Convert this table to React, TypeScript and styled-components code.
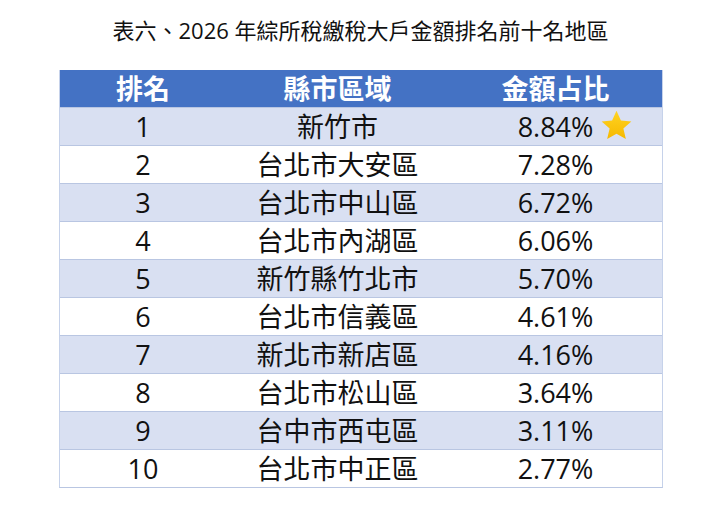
import styled, { createGlobalStyle } from "styled-components";

const rows: [string, string, string][] = [
  ["1", "新竹市", "8.84%"],
  ["2", "台北市大安區", "7.28%"],
  ["3", "台北市中山區", "6.72%"],
  ["4", "台北市內湖區", "6.06%"],
  ["5", "新竹縣竹北市", "5.70%"],
  ["6", "台北市信義區", "4.61%"],
  ["7", "新北市新店區", "4.16%"],
  ["8", "台北市松山區", "3.64%"],
  ["9", "台中市西屯區", "3.11%"],
  ["10", "台北市中正區", "2.77%"],
];

export default function App() {
  return (
    <>
      <GlobalStyle />
      <StyledPage>
        <StyledTitle>{"表六、2026 年綜所稅繳稅大戶金額排名前十名地區"}</StyledTitle>
        <StyledTable>
          <StyledHeadRow>
            <StyledCell>{"排名"}</StyledCell>
            <StyledCell>{"縣市區域"}</StyledCell>
            <StyledCell>{"金額占比"}</StyledCell>
          </StyledHeadRow>
          {rows.map(([rank, area, share], i) => (
            <StyledRow key={rank} $shaded={i % 2 === 0}>
              <StyledCell>{rank}</StyledCell>
              <StyledCell>{area}</StyledCell>
              <StyledCell>
                <StyledShare>
                  {share}
                  {i === 0 && <Star />}
                </StyledShare>
              </StyledCell>
            </StyledRow>
          ))}
        </StyledTable>
      </StyledPage>
    </>
  );
}

function Star() {
  return (
    <StyledStar viewBox="0 0 24 24" aria-hidden>
      <defs>
        <linearGradient id="starFill" x1="0" y1="0" x2="0" y2="1">
          <stop offset="0" stopColor="#ffd322" />
          <stop offset="1" stopColor="#f6b900" />
        </linearGradient>
      </defs>
      <path
        d="M12 1.2l3.2 7.1 7.6.7-5.8 5.1 1.8 7.6L12 17.8l-6.8 3.9 1.8-7.6-5.8-5.1 7.6-.7z"
        fill="url(#starFill)"
      />
    </StyledStar>
  );
}

const GlobalStyle = createGlobalStyle`
  body {
    margin: 0;
    background: #fff;
    font-family: "Open Sans", "Noto Sans CJK TC", sans-serif;
  }
`;

const StyledPage = styled.div`
  width: 701px;
  height: 510px;
  padding: 14px 38px 0 59px;
  box-sizing: border-box;
`;

const StyledTitle = styled.div`
  margin: 0 -38px 24px -39px;
  text-align: center;
  font-size: 22px;
  line-height: 32px;
  color: #111;
`;

const StyledTable = styled.div`
  display: flex;
  flex-direction: column;
  border-left: 1px solid #c6d2ea;
  border-right: 1px solid #c6d2ea;
  border-bottom: 1px solid #b9c6e2;
`;

const StyledHeadRow = styled.div`
  display: grid;
  grid-template-columns: 166px 223px 1fr;
  height: 37px;
  background: #4472c4;
  color: #fff;
  font-weight: 700;
`;

const StyledRow = styled.div<{ $shaded: boolean }>`
  display: grid;
  grid-template-columns: 166px 223px 1fr;
  height: 37px;
  border-top: 1px solid #b9c6e2;
  background: ${(p) => (p.$shaded ? "#d9e0f2" : "#fff")};
  color: #111;
`;

const StyledCell = styled.div`
  display: flex;
  align-items: center;
  justify-content: center;
  font-size: 27px;
  line-height: 1;
`;

const StyledShare = styled.span`
  position: relative;
`;

const StyledStar = styled.svg`
  position: absolute;
  left: calc(100% + 7px);
  top: 50%;
  width: 33px;
  height: 33px;
  transform: translateY(-54%);
`;
